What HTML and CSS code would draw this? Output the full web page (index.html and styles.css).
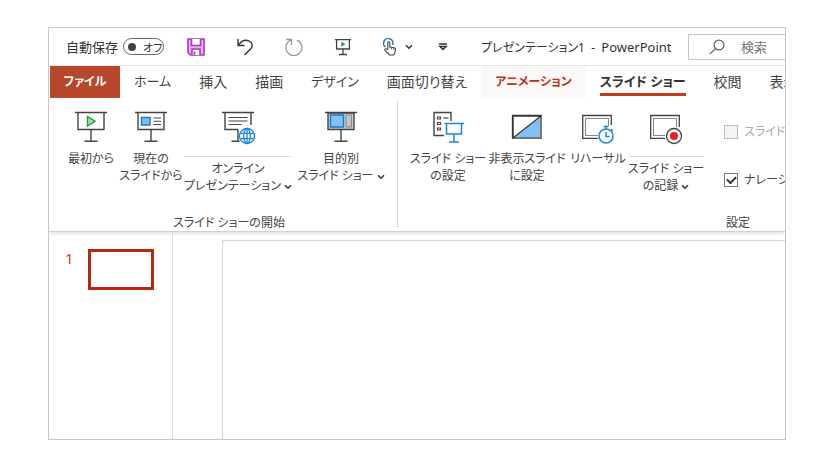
FILE: index.html
```
<!DOCTYPE html>
<html lang="ja">
<head>
    <meta charset="UTF-8">
    <meta name="viewport" content="width=device-width, initial-scale=1.0">
    <title>プレゼンテーション1 - PowerPoint</title>
    <link rel="stylesheet" href="styles.css">
</head>
<body>
    <div class="window">
        <!-- Title bar -->
        <header class="titlebar">
            <label class="autosave-label" for="autosave">自動保存</label>
            <button type="button" class="toggle" id="autosave"><span class="toggle-dot"></span>オフ</button>
            <div class="quick-access">
                <button type="button" class="icon-btn" aria-label="保存">
                    <svg width="18" height="18" viewBox="0 0 18 18" fill="#e3b3ea" stroke="#a63db8" stroke-width="1.6">
                        <path d="M1 1h16v16H3.500L1 14.500z"/>
                        <path d="M4.500 1v6.500h9V1" fill="#fff"/>
                        <path d="M5 17v-6h8v6" fill="#fff"/>
                        <path d="M7.500 13.500V17"/>
                    </svg>
                </button>
                <button type="button" class="icon-btn" aria-label="元に戻す">
                    <svg width="18" height="18" viewBox="0 0 18 18" fill="none" stroke="#333" stroke-width="1.4">
                        <path d="M2 1v6.500h6.500"/>
                        <path d="M2.200 7.300C5 3.500 9 1.200 12.700 2.800c4 1.700 4.300 5.700 1.800 8.200L8.500 17"/>
                    </svg>
                </button>
                <button type="button" class="icon-btn" aria-label="やり直し">
                    <svg width="18" height="18" viewBox="0 0 18 18" fill="none" stroke="#999" stroke-width="1.300">
                        <path d="M1 1.500h5.500V7"/>
                        <path d="M6.300 2A8 8 0 1 0 12 2.200"/>
                    </svg>
                </button>
                <button type="button" class="icon-btn" aria-label="最初から開始">
                    <svg width="18" height="18" viewBox="0 0 18 18" fill="none" stroke="#444" stroke-width="1.300">
                        <path d="M1 1.600h16M2.600 2v9h12.800V2M9 11v5.500M5 16.500h8"/>
                        <path d="M7.300 3.800v5l4.200-2.500z" fill="#21a04a" stroke="none"/>
                    </svg>
                </button>
                <button type="button" class="icon-btn touch-btn" aria-label="タッチ/マウス モードの切り替え">
                    <svg width="14" height="18" viewBox="0 0 14 18" fill="none">
                        <path d="M2.500 9A4.700 4.700 0 1 1 9.600 7" stroke="#1c79cf" stroke-width="1.500"/>
                        <path d="M4.800 11.500V5c0-1.500 2-1.500 2 0v4l4.500.8c1 .2 1.400.8 1.200 1.800l-.7 3.400-1.200 2H6.500L2 12.300c-.8-1.200.7-2 1.500-1.200z" fill="#fff" stroke="#444" stroke-width="1.100"/>
                        <path d="M8.500 9.500v2M10.500 10v2" stroke="#444" stroke-width=".8"/>
                    </svg>
                    <svg class="chevron" width="8" height="6" viewBox="0 0 8 6"><path d="M1 1.200l3 3 3-3"/></svg>
                </button>
                <button type="button" class="icon-btn" aria-label="クイック アクセス ツール バーのカスタマイズ">
                    <svg width="10" height="8" viewBox="0 0 10 8" fill="none" stroke="#333" stroke-width="1.300">
                        <path d="M1 1h8M1.800 3.500h6.400L5 6.500z"/>
                    </svg>
                </button>
            </div>
            <h1 class="doc-title">プレゼンテーション1&nbsp; -&nbsp; <span class="app-name">PowerPoint</span></h1>
            <label class="search">
                <svg width="16" height="16" viewBox="0 0 16 16" fill="none" stroke="#666" stroke-width="1.200">
                    <circle cx="10" cy="6" r="4.900"/>
                    <path d="M6.500 9.500L.8 15.200"/>
                </svg>
                <input type="text" placeholder="検索" aria-label="検索">
            </label>
        </header>

        <!-- Ribbon tabs -->
        <nav class="tabs">
            <a href="#" class="tab tab-file">ファイル</a>
            <a href="#" class="tab tab-kana">ホーム</a>
            <a href="#" class="tab">挿入</a>
            <a href="#" class="tab">描画</a>
            <a href="#" class="tab tab-kana">デザイン</a>
            <a href="#" class="tab">画面切り替え</a>
            <a href="#" class="tab tab-hot">アニメーション</a>
            <a href="#" class="tab tab-active"><span>スライド ショー</span></a>
            <a href="#" class="tab">校閲</a>
            <a href="#" class="tab">表示</a>
        </nav>

        <!-- Ribbon -->
        <section class="ribbon">
            <div class="group group-start">
                <div class="group-items">
                    <button type="button" class="tool tool-small">
                        <svg width="34" height="34" viewBox="0 0 34 34" fill="none" stroke="#444" stroke-width="1.400">
                            <path d="M1 1.500h32M4 2v16.500h26V2M17 18.500V30M10.500 30.300h13"/>
                            <path d="M13.500 5.500v9.500l7.500-4.800z" fill="#a8e0b4" stroke="#1f9a45"/>
                        </svg>
                        <span class="tool-label">最初から</span>
                    </button>
                    <button type="button" class="tool tool-small">
                        <svg width="34" height="34" viewBox="0 0 34 34" fill="none" stroke="#444" stroke-width="1.400">
                            <path d="M1 1.500h32M4 2v16.500h26V2M17 18.500V30M10.500 30.300h13"/>
                            <path d="M7.500 6.500h8.500v7.500H7.500z" fill="#7fbdf2" stroke="#1977cc"/>
                            <path d="M19.500 7h7.500M19.500 10.200h7.500M19.500 13.500h7.500" stroke-width="1.100"/>
                        </svg>
                        <span class="tool-label">現在の<br>スライドから</span>
                    </button>
                    <button type="button" class="tool tool-wide tool-split">
                        <svg width="34" height="34" viewBox="0 0 34 34" fill="none" stroke="#444" stroke-width="1.400">
                            <path d="M1 1.500h32M4 2v16.500h13M30 2v12M17 18.500V30M10.500 30.300h8"/>
                            <path d="M7.500 6.500h19M7.500 10h19M7.500 13.500h13" stroke-width="1.100"/>
                            <g stroke="#1a86d9" stroke-width="1.300">
                                <circle cx="26" cy="25" r="7.500" fill="#fff"/>
                                <ellipse cx="26" cy="25" rx="3.300" ry="7.500"/>
                                <path d="M19.500 22.300h13M19.500 27.700h13M26 17.500v15"/>
                            </g>
                        </svg>
                        <span class="tool-label">オンライン<br>プレゼンテーション <svg class="chevron" width="8" height="6" viewBox="0 0 8 6"><path d="M1 1.200l3 3 3-3"/></svg></span>
                    </button>
                    <button type="button" class="tool tool-medium">
                        <svg width="34" height="34" viewBox="0 0 34 34" fill="none" stroke="#444" stroke-width="1.400">
                            <path d="M4 2h26v16.500H4z" fill="#ccc"/>
                            <path d="M1 1.500h32M17 18.500V30M10.500 30.300h13"/>
                            <path d="M6.500 4h13v12h-13z" fill="#83c1f5" stroke="#1977cc"/>
                            <path d="M22 4h5.500v12H22z" fill="#c4c4c4" stroke="#888" stroke-width="1"/>
                        </svg>
                        <span class="tool-label">目的別<br>スライド ショー <svg class="chevron" width="8" height="6" viewBox="0 0 8 6"><path d="M1 1.200l3 3 3-3"/></svg></span>
                    </button>
                </div>
                <div class="group-name">スライド ショーの開始</div>
            </div>
            <div class="separator"></div>
            <div class="group group-setup">
                <div class="group-items">
                    <button type="button" class="tool">
                        <svg width="32" height="34" viewBox="0 0 32 34" fill="none" stroke="#444" stroke-width="1.400">
                            <path d="M12 24.500H2v-23h17V10"/>
                            <path d="M5.500 6h3v2h-3zM5.500 11.500h3v2h-3zM5.500 17h3v2h-3z" stroke-width="1.200"/>
                            <path d="M11.500 7h5" stroke-width="1.200"/>
                            <path d="M12.500 12.500H32M14.500 13v10h15V13M22 23v8M17 31h10" stroke="#1a86d9" stroke-width="1.500"/>
                        </svg>
                        <span class="tool-label">スライド ショー<br>の設定</span>
                    </button>
                    <button type="button" class="tool tool-hide">
                        <svg width="32" height="34" viewBox="0 0 32 34" fill="none">
                            <path d="M2 5h28v22H2z" fill="#fff" stroke="#777" stroke-width="2"/>
                            <path d="M29 6.500V26H4z" fill="#83c1f5"/>
                            <path d="M1.500 27.500v-23h29M2 27L30 5" stroke="#333" stroke-width="1.300"/>
                        </svg>
                        <span class="tool-label">非表示スライド<br>に設定</span>
                    </button>
                    <button type="button" class="tool tool-small">
                        <svg width="34" height="34" viewBox="0 0 34 34" fill="none" stroke="#444" stroke-width="1.300">
                            <path d="M17 27.300H1.700V4.500h28.600V14"/>
                            <path d="M17 24.500H4.500v-17h23V15" stroke="#888" stroke-width="1.100"/>
                            <g stroke="#1a86d9" stroke-width="1.500">
                                <circle cx="25" cy="25" r="7"/>
                                <path d="M25 18v-2.500M22.500 15.500h5M30.300 18.300l1.700 1.700M25 21v4.500h3.500"/>
                            </g>
                        </svg>
                        <span class="tool-label">リハーサル</span>
                    </button>
                    <button type="button" class="tool tool-split tool-record">
                        <svg width="34" height="34" viewBox="0 0 34 34" fill="none" stroke="#444" stroke-width="1.300">
                            <path d="M16 27.300H1.700V4.500h28.600V16"/>
                            <path d="M16 24.500H4.500v-17h23V16" stroke="#888" stroke-width="1.100"/>
                            <circle cx="25" cy="25" r="7.500" fill="#fff"/>
                            <circle cx="25" cy="25" r="4" fill="#ed1c24" stroke="none"/>
                        </svg>
                        <span class="tool-label">スライド ショー<br>の記録 <svg class="chevron" width="8" height="6" viewBox="0 0 8 6"><path d="M1 1.200l3 3 3-3"/></svg></span>
                    </button>
                    <div class="checks">
                        <label class="check check-disabled"><input type="checkbox" disabled> スライドを最新の状態に保つ</label>
                        <label class="check"><input type="checkbox" checked> ナレーションの再生</label>
                    </div>
                </div>
                <div class="group-name">設定</div>
            </div>
        </section>

        <!-- Slide list and editing area -->
        <main class="workspace">
            <aside class="slide-list">
                <span class="slide-number">1</span>
                <a href="#" class="thumb" aria-label="スライド 1"></a>
            </aside>
            <div class="editor">
                <div class="slide"></div>
            </div>
        </main>
    </div>
</body>
</html>
```

FILE: styles.css
```
* {
    box-sizing: border-box;
}

body {
    margin: 0;
    padding: 27px 48px 30px;
    min-height: 100vh;
    display: flex;
    background-color: #fff;
    color: #444;
    font-family: "Noto Sans", "Noto Sans CJK JP", sans-serif;
    font-size: 12px;
    font-feature-settings: "palt";
}

button,
input {
    font: inherit;
    font-feature-settings: inherit;
    color: inherit;
}

button {
    border: none;
    background: none;
    padding: 0;
}

a {
    color: inherit;
    text-decoration: none;
}

.window {
    flex: 1;
    min-width: 0;
    display: flex;
    flex-direction: column;
    border: 1px solid #c8c8c8;
    overflow: hidden;
}

.chevron {
    fill: none;
    stroke: #333;
    stroke-width: 1.5;
}

/* Title bar */
.titlebar {
    display: flex;
    align-items: center;
    height: 38px;
    padding-left: 17px;
    border-bottom: 1px solid #e6e6e6;
    color: #333;
    white-space: nowrap;
}

.autosave-label {
    flex: none;
    width: 57px;
    font-size: 13px;
}

.toggle {
    flex: none;
    display: flex;
    align-items: center;
    gap: 7px;
    width: 41px;
    height: 17px;
    padding-left: 4px;
    border: 1px solid #666;
    border-radius: 9px;
    font-size: 11px;
}

.toggle-dot {
    width: 8px;
    height: 8px;
    border-radius: 50%;
    background-color: #444;
}

.quick-access {
    flex: none;
    display: flex;
    align-items: center;
    gap: 31px;
    margin-left: 23px;
}

.icon-btn {
    display: flex;
    align-items: center;
}

.touch-btn {
    gap: 8px;
    margin-right: -6px;
}

.doc-title {
    flex: none;
    width: 207px;
    margin: 0 0 0 33px;
    font-size: 12px;
    font-weight: normal;
}

.app-name {
    font-size: 13px;
}

.search {
    flex: 1 0 160px;
    display: flex;
    align-items: center;
    gap: 16px;
    height: 26px;
    padding-left: 20px;
    border: 1px solid #c6c6c6;
    color: #666;
}

.search input {
    width: 100px;
    padding: 0;
    border: none;
    outline: none;
    font-size: 13px;
}

.search input::placeholder {
    color: #777;
}

/* Tabs */
.tabs {
    display: flex;
    height: 32px;
    padding-left: 1px;
    font-size: 14px;
    line-height: 31px;
    white-space: nowrap;
}

.tab {
    flex: none;
    padding: 0 14px;
}

.tab-kana {
    font-size: 13px;
}

.tab-file {
    width: 70px;
    padding: 0;
    background-color: #b7472a;
    color: #fff;
    font-weight: bold;
    font-size: 12px;
    text-align: center;
}

.tab-hot {
    background-color: #faf9f8;
    color: #c43016;
    font-weight: bold;
    font-size: 12px;
}

.tab-active {
    color: #333;
    font-weight: bold;
    font-size: 13px;
}

.tab-active span {
    display: block;
    height: 30px;
    border-bottom: 3px solid #c43e1c;
}

/* Ribbon */
.ribbon {
    display: flex;
    height: 134px;
    padding-top: 3px;
    border-bottom: 1px solid #d0d0d0;
    box-shadow: 0 2px 3px #e4e4e4;
}

.group {
    flex: none;
    display: flex;
    flex-direction: column;
    justify-content: space-between;
    padding-left: 12px;
}

.group-start {
    width: 348px;
}

.group-setup {
    width: 668px;
}

.separator {
    flex: none;
    width: 1px;
    margin-bottom: 4px;
    background-color: #d8d8d8;
}

.group-items {
    display: flex;
    align-items: flex-start;
    padding-top: 10px;
}

.group-name {
    text-align: center;
    line-height: 16px;
}

.tool {
    display: flex;
    flex-direction: column;
    align-items: center;
    gap: 5px;
    width: 76px;
    line-height: 17px;
    white-space: nowrap;
}

.tool > svg {
    flex: none;
}

.tool-small {
    width: 60px;
}

.tool-wide {
    width: 114px;
}

.tool-medium {
    width: 92px;
}

.tool-hide {
    width: 82px;
}

.tool-split {
    gap: 11px;
}

.tool-split .tool-label {
    border-top: 1px solid #dcdcdc;
    padding-top: 3px;
}

.checks {
    display: flex;
    flex-direction: column;
    gap: 30px;
    margin-left: 20px;
    padding-top: 12px;
    white-space: nowrap;
}

.check {
    display: flex;
    align-items: center;
    gap: 6px;
    line-height: 18px;
}

.check-disabled {
    color: #aaa;
}

.check input {
    appearance: none;
    display: grid;
    place-items: center;
    width: 14px;
    height: 14px;
    margin: 0;
    border: 1px solid #777;
    background-color: #fff;
}

.check input:disabled {
    border-color: #bbb;
    background-color: #f4f4f4;
}

.check input:checked::after {
    content: "";
    width: 7px;
    height: 4px;
    margin-bottom: 2px;
    border-left: 2px solid #333;
    border-bottom: 2px solid #333;
    transform: rotate(-45deg);
}

/* Workspace */
.workspace {
    flex: 1;
    display: flex;
}

.slide-list {
    display: flex;
    align-items: flex-start;
    gap: 14px;
    width: 124px;
    padding: 17px 0 0 16px;
    border-right: 1px solid #dedede;
}

.slide-number {
    color: #d0401f;
    font-size: 15px;
    line-height: 18px;
}

.thumb {
    width: 66px;
    height: 41px;
    border: 3px solid #b7280f;
}

.editor {
    flex: 1;
    display: flex;
    padding: 8px 0 0 49px;
}

.slide {
    flex: 1;
    border-top: 1px solid #d6d6d6;
    border-left: 1px solid #d6d6d6;
}
```
